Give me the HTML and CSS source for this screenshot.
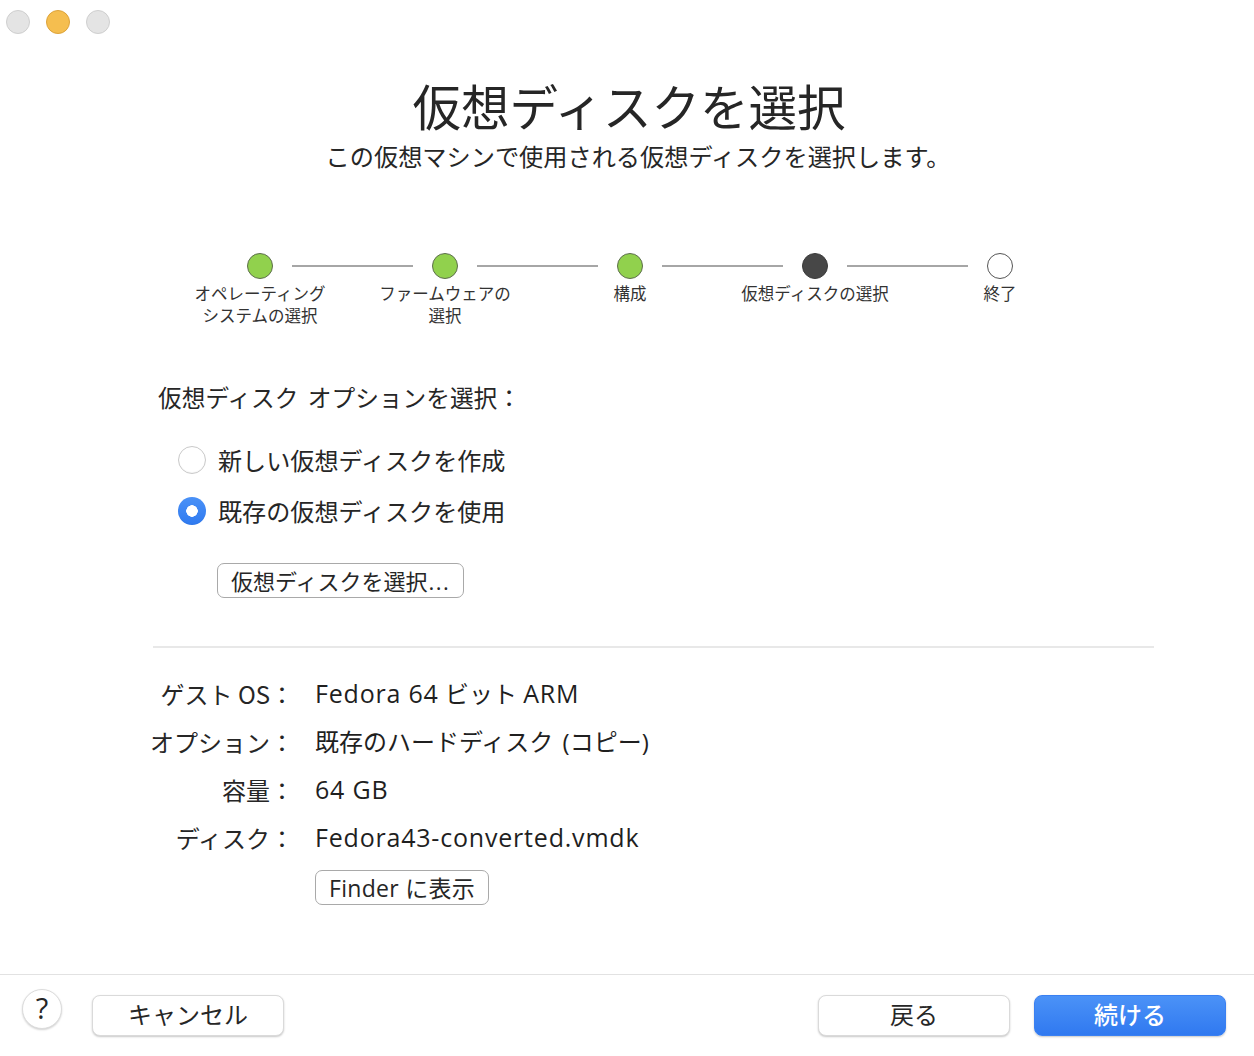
FILE: index.html
```html
<!DOCTYPE html>
<html lang="ja">
<head>
<meta charset="utf-8">
<title>仮想ディスクを選択</title>
<link rel="stylesheet" href="styles.css">
</head>
<body>
<div class="window">
  <div class="titlebar">
    <span class="light light-idle"></span>
    <span class="light light-min"></span>
    <span class="light light-idle"></span>
  </div>

  <header class="header">
    <h1 class="title">仮想ディスクを選択</h1>
    <p class="subtitle">この仮想マシンで使用される仮想ディスクを選択します。</p>
  </header>

  <div class="steps">
    <span class="dot dot-done"></span>
    <span class="track"></span>
    <span class="dot dot-done"></span>
    <span class="track"></span>
    <span class="dot dot-done"></span>
    <span class="track"></span>
    <span class="dot dot-current"></span>
    <span class="track"></span>
    <span class="dot dot-todo"></span>

    <span class="step-label col1">オペレーティング<br>システムの選択</span>
    <span class="step-label col3">ファームウェアの<br>選択</span>
    <span class="step-label col5">構成</span>
    <span class="step-label col7">仮想ディスクの選択</span>
    <span class="step-label col9">終了</span>
  </div>

  <section class="content">
    <h2 class="prompt">仮想ディスク オプションを選択：</h2>
    <div class="radios">
      <label class="radio-row"><span class="radio"></span><span>新しい仮想ディスクを作成</span></label>
      <label class="radio-row"><span class="radio radio-on"></span><span>既存の仮想ディスクを使用</span></label>
    </div>
    <div class="choose-wrap"><button class="btn-small">仮想ディスクを選択<span class="dots">...</span></button></div>
  </section>

  <hr class="divider">

  <section class="info">
    <div class="info-label">ゲスト OS：</div><div class="info-value"><span class="lat">Fedora 64</span> ビット <span class="lat">ARM</span></div>
    <div class="info-label">オプション：</div><div class="info-value">既存のハードディスク <span class="paren">(コピー)</span></div>
    <div class="info-label">容量：</div><div class="info-value"><span class="lat">64 GB</span></div>
    <div class="info-label">ディスク：</div><div class="info-value"><span class="lat">Fedora43-converted.vmdk</span></div>
    <div class="info-label"></div><div class="info-value"><button class="btn-small btn-finder">Finder に表示</button></div>
  </section>

  <footer class="footer">
    <button class="help">?</button>
    <button class="btn-large">キャンセル</button>
    <span class="spacer"></span>
    <button class="btn-large">戻る</button>
    <button class="btn-large btn-primary">続ける</button>
  </footer>
</div>
</body>
</html>
```

FILE: styles.css
```css
* { box-sizing: border-box; }

html, body {
  margin: 0;
  padding: 0;
  background: #ffffff;
}

body {
  font-family: "Open Sans", "Noto Sans CJK JP", sans-serif;
  color: #262626;
}

.window {
  width: 1254px;
  height: 1056px;
  display: flex;
  flex-direction: column;
  background: #ffffff;
  overflow: hidden;
}

/* title bar */
.titlebar {
  height: 44px;
  display: flex;
  align-items: center;
  gap: 16px;
  padding-left: 6px;
  flex: none;
}
.light {
  width: 24px;
  height: 24px;
  border-radius: 50%;
}
.light-idle {
  background: #e4e4e4;
  border: 1px solid #cfcfcf;
}
.light-min {
  background: #f5be4f;
  border: 1px solid #dda33a;
}

/* header */
.header {
  text-align: center;
  flex: none;
}
.title {
  margin: 33px 0 0;
  padding-left: 4px;
  font-size: 48.5px;
  line-height: 56px;
  font-weight: 400;
  color: #262626;
  font-family: "Noto Sans CJK JP", sans-serif;
}
.subtitle {
  margin: 8px 0 0;
  font-size: 24.2px;
  line-height: 30px;
  color: #262626;
  font-family: "Noto Sans CJK JP", sans-serif;
  padding-left: 22px;
}

/* steps */
.steps {
  margin: 82px 0 0 247px;
  display: grid;
  grid-template-columns: 26px 159px 26px 159px 26px 159px 26px 159px 26px;
  grid-template-rows: 26px auto;
  row-gap: 3px;
  align-items: center;
  flex: none;
}
.dot {
  width: 26px;
  height: 26px;
  border-radius: 50%;
}
.dot-done {
  background: #91d14d;
  border: 1px solid #5d6e4c;
}
.dot-current {
  background: #474747;
  border: 1px solid #3a3a3a;
}
.dot-todo {
  background: #ffffff;
  border: 1px solid #555555;
}
.track {
  height: 2px;
  background: #a6a6a6;
  margin: 0 19px;
}
.step-label {
  grid-row: 2;
  justify-self: center;
  width: max-content;
  text-align: center;
  font-size: 16.5px;
  line-height: 22px;
  color: #333333;
  font-family: "Noto Sans CJK JP", sans-serif;
  align-self: start;
}
.col1 { grid-column: 1; }
.col3 { grid-column: 3; }
.col5 { grid-column: 5; }
.col7 { grid-column: 7; }
.col9 { grid-column: 9; }

/* options */
.content {
  padding-left: 158px;
  flex: none;
}
.prompt {
  margin: 56px 0 0;
  font-size: 23.7px;
  line-height: 30px;
  font-weight: 400;
  word-spacing: 4px;
  color: #262626;
  font-family: "Noto Sans CJK JP", sans-serif;
}
.radios {
  margin: 30px 0 0 20px;
  display: flex;
  flex-direction: column;
  gap: 15px;
}
.radio-row {
  display: flex;
  align-items: center;
  gap: 12px;
  height: 36px;
  font-size: 24.1px;
  line-height: 36px;
  font-family: "Noto Sans CJK JP", sans-serif;
  color: #262626;
}
.radio {
  width: 28px;
  height: 28px;
  border-radius: 50%;
  background: #ffffff;
  border: 1px solid #c9c9c9;
  box-shadow: inset 0 -1px 1px rgba(0,0,0,0.04);
  flex: none;
}
.radio-on {
  border: none;
  background: radial-gradient(circle, #ffffff 0 5.5px, transparent 6px), linear-gradient(#4a91f7, #2f7af0);
}
.choose-wrap {
  margin: 34px 0 0 59px;
}

.btn-small {
  height: 35px;
  padding: 0 13px 0 13px;
  border: 1.5px solid #a9a9a9;
  border-radius: 7px;
  background: #ffffff;
  font-family: "Open Sans", "Noto Sans CJK JP", sans-serif;
  font-size: 22px;
  line-height: 30px;
  color: #262626;
}
.dots {
  letter-spacing: 1.5px;
  padding-left: 1px;
}

.divider {
  margin: 48px 0 0 153px;
  width: 1001px;
  height: 0;
  border: none;
  border-top: 2px solid #e8e8e8;
  flex: none;
}

/* info */
.info {
  display: grid;
  grid-template-columns: 294px 1fr;
  column-gap: 21px;
  margin-top: 22px;
  flex: none;
}
.info-label {
  text-align: right;
  font-size: 24px;
  line-height: 48px;
  color: #262626;
  font-family: "Noto Sans CJK JP", sans-serif;
}
.info-label:nth-last-child(2) {
  line-height: 0;
}
.info-value {
  font-size: 24px;
  line-height: 48px;
  height: 48px;
  color: #1f1f1f;
}
.lat {
  font-size: 25px;
  line-height: 1;
  letter-spacing: 0.8px;
}
.paren {
  padding-left: 3px;
}
.info-value:last-child {
  line-height: 1;
  height: auto;
  padding-top: 8px;
}
.btn-finder {
  letter-spacing: 0.3px;
  padding: 0 13px;
  font-size: 23px;
}

/* footer */
.footer {
  margin-top: auto;
  height: 82px;
  border-top: 1px solid #e2e2e2;
  display: flex;
  align-items: center;
  padding: 0 28px 0 22px;
  flex: none;
}
.help {
  width: 40px;
  height: 40px;
  border-radius: 50%;
  border: 1px solid #dcdcdc;
  background: #ffffff;
  box-shadow: 0 1px 2px rgba(0,0,0,0.18);
  font-family: "Open Sans", sans-serif;
  font-size: 29px;
  font-weight: 500;
  line-height: 1;
  color: #262626;
  padding: 0 0 2px;
  margin: 0 30px 14px 0;
}
.spacer { flex: 1; }
.btn-large {
  width: 192px;
  height: 41px;
  border-radius: 8px;
  border: 1px solid #dadada;
  background: #ffffff;
  box-shadow: 0 1px 2px rgba(0,0,0,0.22);
  font-family: "Noto Sans CJK JP", sans-serif;
  font-size: 24px;
  line-height: 1;
  color: #262626;
  padding: 0 0 3px;
}
.btn-large + .btn-large {
  margin-left: 24px;
}
.btn-primary {
  background: linear-gradient(#4b92f7, #3079f0);
  border: 1px solid #3a80f2;
  color: #ffffff;
  font-weight: 500;
}
```
